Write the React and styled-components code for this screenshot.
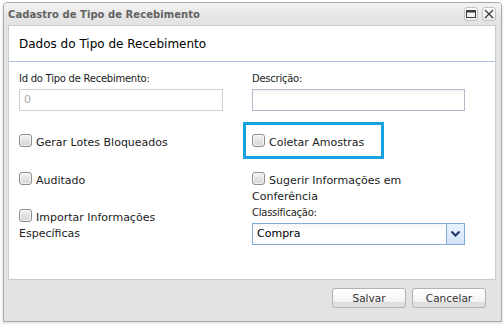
import React from "react";
import styled, { createGlobalStyle } from "styled-components";

const GlobalStyle = createGlobalStyle`
  html, body {
    margin: 0;
    background: #ffffff;
  }
  body {
    padding: 2px 3px;
    font-family: "DejaVu Sans", Tahoma, sans-serif;
  }
`;

const Window = styled.div`
  box-sizing: border-box;
  width: 499px;
  border: 1px solid #a9a9a9;
  border-radius: 4px 4px 0 0;
  background: #e3e3e3;
  box-shadow: 0 2px 3px 1px rgba(0, 0, 0, 0.09);
`;

const TitleBar = styled.div`
  height: 22px;
  display: flex;
  align-items: center;
  padding: 0 5px 0 4px;
  background: linear-gradient(#f3f3f3, #e6e6e6 60%, #e3e3e3);
  border-radius: 3px 3px 0 0;
`;

const Title = styled.div`
  flex: 1;
  font-size: 10px;
  font-weight: bold;
  color: #626262;
  letter-spacing: 0.05px;
`;

const Tools = styled.div`
  display: flex;
  gap: 4px;
`;

const ToolButton = styled.div`
  box-sizing: border-box;
  width: 14px;
  height: 14px;
  border: 1px solid #c4c4c4;
  border-radius: 3px;
  background: linear-gradient(#fdfdfd, #ececec);
  display: flex;
  align-items: center;
  justify-content: center;
`;

const Frame = styled.div`
  padding: 0 5px 0 4px;
`;

const Panel = styled.div`
  box-sizing: border-box;
  height: 255px;
  border: 1px solid #cbcbcb;
  background: #ffffff;
  display: flex;
  flex-direction: column;
`;

const PanelHeader = styled.div`
  padding: 11px 10px 9px;
  line-height: 15px;
  font-size: 12px;
  color: #000;
  border-bottom: 1px solid #aec1e4;
`;

const PanelBody = styled.div`
  flex: 1;
  display: flex;
  padding: 10px 0 0 10px;
`;

const Column = styled.div`
  width: ${(p) => p.width}px;
  display: flex;
  flex-direction: column;
`;

const Label = styled.div`
  font-size: 10px;
  line-height: 14px;
  color: #222;
  letter-spacing: -0.25px;
  margin-bottom: 3px;
  margin-top: ${(p) => p.top || 0}px;
`;

const TextInput = styled.div`
  box-sizing: border-box;
  width: ${(p) => p.width}px;
  height: 22px;
  border: 1px solid ${(p) => (p.disabled ? "#d0d0d0" : "#b5b8c8")};
  background: ${(p) =>
    p.disabled ? "#ffffff" : "linear-gradient(#f2f2f2, #ffffff 5px)"};
  padding: 0 4px;
  font-size: 11px;
  line-height: 20px;
  color: ${(p) => (p.disabled ? "#a8a8a8" : "#000")};
`;

const CheckRow = styled.div`
  position: relative;
  width: 190px;
  font-size: 11px;
  line-height: 16px;
  color: #222;
  margin-top: ${(p) => p.top}px;

  ${(p) =>
    p.highlight &&
    `
    &::after {
      content: "";
      position: absolute;
      top: -13px;
      left: -9px;
      width: 141px;
      height: 37px;
      box-sizing: border-box;
      border: 3px solid #16a2e0;
      pointer-events: none;
    }
  `}
`;

const Box = styled.span`
  display: inline-block;
  position: relative;
  top: -1px;
  box-sizing: border-box;
  width: 13px;
  height: 13px;
  margin-right: 4px;
  border: 1px solid #8e8e8e;
  border-radius: 3px;
  background: linear-gradient(#f4f4f4, #e2e2e2 50%, #d6d6d6);
  box-shadow: inset 0 0 0 1px rgba(255, 255, 255, 0.6);
  vertical-align: top;
`;

const Select = styled.div`
  box-sizing: border-box;
  width: 213px;
  height: 22px;
  border: 1px solid #7eadd9;
  background: linear-gradient(#f6f6f6, #ffffff 6px);
  display: flex;
`;

const SelectValue = styled.div`
  flex: 1;
  padding: 0 4px;
  font-size: 11px;
  line-height: 20px;
  color: #000;
`;

const Trigger = styled.div`
  width: 17px;
  border-left: 1px solid #7eadd9;
  background: linear-gradient(#e8f1fc, #d3e4f8);
  display: flex;
  align-items: center;
  justify-content: center;
`;

const Footer = styled.div`
  height: 41px;
  box-sizing: border-box;
  padding: 8px 15px 0 0;
  display: flex;
  justify-content: flex-end;
  gap: 6px;
`;

const Button = styled.button`
  box-sizing: border-box;
  width: 74px;
  height: 20px;
  padding: 0;
  border: 1px solid #b1b1b1;
  border-radius: 3px;
  background: linear-gradient(#fefefe, #f3f3f3 70%, #dcdcdc 71%, #e2e2e2);
  font-family: "DejaVu Sans", Tahoma, sans-serif;
  font-size: 10.5px;
  color: #333;
`;

function Check({ children, top, highlight }) {
  return (
    <CheckRow top={top} highlight={highlight}>
      <Box />
      {children}
    </CheckRow>
  );
}

function App() {
  return (
    <>
      <GlobalStyle />
      <Window>
        <TitleBar>
          <Title>Cadastro de Tipo de Recebimento</Title>
          <Tools>
            <ToolButton>
              <svg width="10" height="8" viewBox="0 0 10 8">
                <rect x="0.5" y="0.5" width="9" height="7" fill="none" stroke="#3c3c3c" />
                <rect x="0.5" y="0.5" width="9" height="2" fill="#3c3c3c" />
              </svg>
            </ToolButton>
            <ToolButton>
              <svg width="10" height="10" viewBox="0 0 10 10">
                <path d="M1 1 L9 9 M9 1 L1 9" stroke="#3c3c3c" strokeWidth="1.3" />
              </svg>
            </ToolButton>
          </Tools>
        </TitleBar>
        <Frame>
          <Panel>
            <PanelHeader>Dados do Tipo de Recebimento</PanelHeader>
            <PanelBody>
              <Column width={233}>
                <Label>Id do Tipo de Recebimento:</Label>
                <TextInput width={204} disabled>
                  0
                </TextInput>
                <Check top={24}>Gerar Lotes Bloqueados</Check>
                <Check top={22}>Auditado</Check>
                <Check top={21}>Importar Informações Específicas</Check>
              </Column>
              <Column width={213}>
                <Label>Descrição:</Label>
                <TextInput width={213} />
                <Check top={24} highlight>
                  Coletar Amostras
                </Check>
                <Check top={22}>Sugerir Informações em Conferência</Check>
                <Label top={1}>Classificação:</Label>
                <Select>
                  <SelectValue>Compra</SelectValue>
                  <Trigger>
                    <svg width="9" height="6" viewBox="0 0 9 6">
                      <path d="M0.5 0.5 L4.5 4.5 L8.5 0.5" fill="none" stroke="#1d3767" strokeWidth="2" />
                    </svg>
                  </Trigger>
                </Select>
              </Column>
            </PanelBody>
          </Panel>
        </Frame>
        <Footer>
          <Button>Salvar</Button>
          <Button>Cancelar</Button>
        </Footer>
      </Window>
    </>
  );
}

export default App;
